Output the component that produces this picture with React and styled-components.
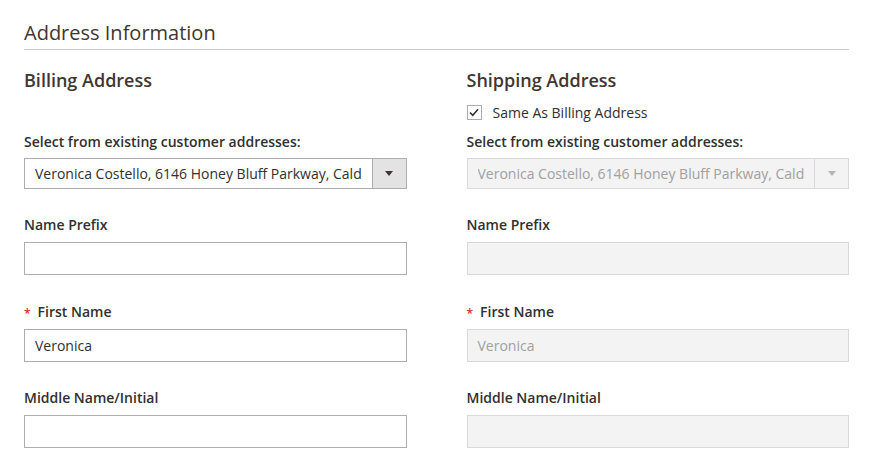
import React from 'react'
import styled, { createGlobalStyle, css } from 'styled-components'

const GlobalStyle = createGlobalStyle`
  body {
    margin: 0;
    background: #ffffff;
    font-family: 'Open Sans', 'Liberation Sans', Arial, sans-serif;
    color: #303030;
  }
`

const Section = styled.section`
  padding: 19px 20px 0 24px;
`

const SectionTitle = styled.h2`
  margin: 0;
  padding-bottom: 2px;
  font-size: 20px;
  line-height: 28px;
  font-weight: 400;
  color: #41362f;
  border-bottom: 1px solid #cccccc;
`

const Columns = styled.div`
  display: grid;
  grid-template-columns: minmax(0, 1fr) minmax(0, 1fr);
  column-gap: 60px;
  margin-top: 18px;
`

const ColumnTitle = styled.h3`
  margin: 0;
  font-size: 18px;
  line-height: 24px;
  font-weight: 600;
  color: #41362f;
`

const CheckRow = styled.label`
  display: flex;
  align-items: center;
  gap: 11px;
  height: 20px;
  margin: 10px 0;
  font-size: 14px;
  color: #303030;
`

const CheckBox = styled.span`
  display: flex;
  align-items: center;
  justify-content: center;
  width: 15px;
  height: 15px;
  box-sizing: border-box;
  border: 1px solid #adadad;
  background: #ffffff;
`

const Field = styled.div`
  margin-bottom: ${(p) => p.$gap || 26}px;
`

const Label = styled.div`
  display: flex;
  align-items: center;
  font-size: 14px;
  line-height: 20px;
  font-weight: 600;
  color: #303030;
  margin-bottom: ${(p) => (p.$select ? '6px' : '7px')};
`

const Required = styled.span`
  color: #e22626;
  font-size: 12px;
  margin-right: 7px;
  position: relative;
  top: 2px;
`

const boxStyle = css`
  box-sizing: border-box;
  border: 1px solid ${(p) => (p.$disabled ? '#d9d9d9' : '#adadad')};
  background: ${(p) => (p.$disabled ? '#f3f3f3' : '#ffffff')};
  color: ${(p) => (p.$disabled ? '#a0a0a0' : '#303030')};
  font-size: 14px;
`

const Input = styled.div`
  ${boxStyle}
  height: 33px;
  line-height: 32px;
  padding: 0 10px;
`

const Select = styled.div`
  ${boxStyle}
  display: flex;
  height: 31px;
`

const SelectValue = styled.div`
  flex: 1;
  overflow: hidden;
  white-space: nowrap;
  line-height: 29px;
  margin: 0 10px;
`

const SelectArrow = styled.div`
  width: 33px;
  flex: none;
  display: flex;
  align-items: center;
  justify-content: center;
  border-left: 1px solid ${(p) => (p.$disabled ? '#d9d9d9' : '#adadad')};
  background: ${(p) => (p.$disabled ? '#f3f3f3' : '#e3e3e3')};
  &::after {
    content: '';
    border-left: 4px solid transparent;
    border-right: 4px solid transparent;
    border-top: 5px solid ${(p) => (p.$disabled ? '#b5b5b5' : '#41362f')};
  }
`

const address = 'Veronica Costello, 6146 Honey Bluff Parkway, Calder, Michigan, 49628-7978, United States'

const AddressColumn = ({ disabled }) => (
  <div>
    <Field>
      <Label $select>Select from existing customer addresses:</Label>
      <Select $disabled={disabled}>
        <SelectValue>{address}</SelectValue>
        <SelectArrow $disabled={disabled} />
      </Select>
    </Field>
    <Field $gap={27}>
      <Label>Name Prefix</Label>
      <Input $disabled={disabled} />
    </Field>
    <Field>
      <Label>
        <Required>*</Required>First Name
      </Label>
      <Input $disabled={disabled}>Veronica</Input>
    </Field>
    <Field>
      <Label>Middle Name/Initial</Label>
      <Input $disabled={disabled} />
    </Field>
  </div>
)

const App = () => {
  return (
    <>
      <GlobalStyle />
      <Section>
        <SectionTitle>Address Information</SectionTitle>
        <Columns>
          <div>
            <ColumnTitle>Billing Address</ColumnTitle>
            <CheckRow as="div" />
          </div>
          <div>
            <ColumnTitle>Shipping Address</ColumnTitle>
            <CheckRow>
              <CheckBox>
                <svg width="10" height="9" viewBox="0 0 10 9">
                  <path d="M1 4.5 L3.8 7.3 L9 1.2" fill="none" stroke="#303030" strokeWidth="1.5" />
                </svg>
              </CheckBox>
              Same As Billing Address
            </CheckRow>
          </div>
          <AddressColumn />
          <AddressColumn disabled />
        </Columns>
      </Section>
    </>
  )
}

export default App
